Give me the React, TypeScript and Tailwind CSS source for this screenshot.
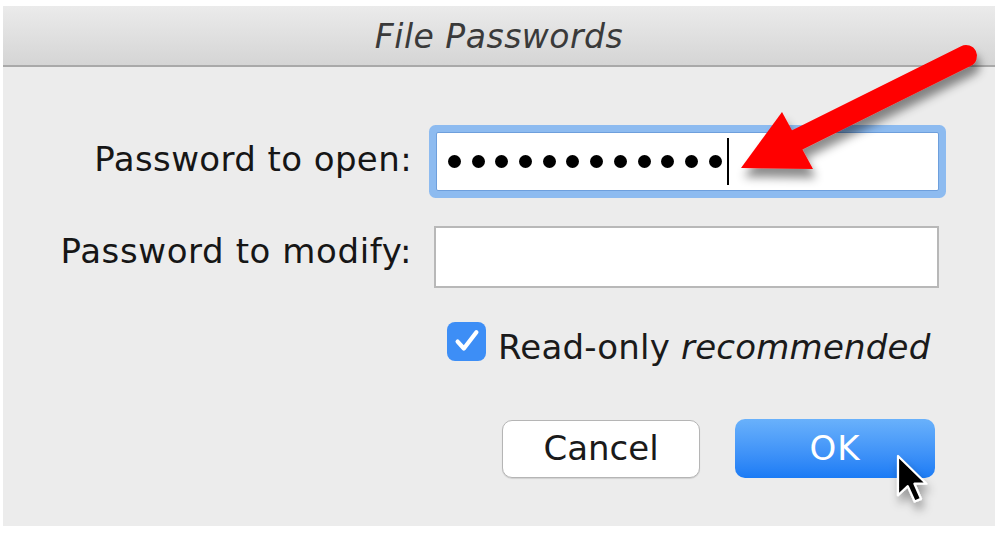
import React from 'react';

const font = { fontFamily: '"DejaVu Sans", "Liberation Sans", sans-serif' };

function Dots({ count }: { count: number }) {
  return (
    <div className="flex items-center gap-[10.7px]">
      {Array.from({ length: count }).map((_, i) => (
        <span key={i} className="block w-[13px] h-[13px] rounded-full bg-black" />
      ))}
    </div>
  );
}

function Annotation() {
  return (
    <svg className="absolute inset-0 pointer-events-none" width="1000" height="544" viewBox="0 0 1000 544">
      <defs>
        <filter id="shadow" x="-20%" y="-20%" width="140%" height="160%">
          <feDropShadow dx="3" dy="9" stdDeviation="5" floodColor="#000" floodOpacity="0.45" />
        </filter>
        <filter id="cshadow" x="-50%" y="-50%" width="200%" height="200%">
          <feDropShadow dx="1" dy="3" stdDeviation="2" floodColor="#000" floodOpacity="0.35" />
        </filter>
      </defs>
      {/* red arrow */}
      <g filter="url(#shadow)">
        <line x1="966" y1="56" x2="795" y2="141" stroke="#ff0000" strokeWidth="22" strokeLinecap="round" />
        <polygon points="741,168 782,112 813,169" fill="#ff0000" />
      </g>
      {/* mouse pointer */}
      <g transform="translate(898 456) scale(2.45)" filter="url(#cshadow)">
        <path
          d="M0 0 L0 16 L4 12.3 L6.8 18.6 L9.4 17.5 L6.7 11.3 L11.6 11.3 Z"
          fill="#000"
          stroke="#fff"
          strokeWidth="0.9"
          strokeLinejoin="round"
        />
      </g>
    </svg>
  );
}

export default function App() {
  return (
    <div className="relative w-[1000px] h-[544px] bg-white overflow-hidden" style={font}>
      <div className="ml-[3px] mt-[6px] w-[992px] h-[520px] flex flex-col bg-[#ececec]">
        {/* Title bar */}
        <div className="h-[61px] shrink-0 flex items-center justify-center bg-gradient-to-b from-[#ebebeb] to-[#d5d5d5] border-b-2 border-[#a9a9a9]">
          <span className="text-[33px] italic text-[#3a3a3a] tracking-[0.5px] pt-[3px]">File Passwords</span>
        </div>

        {/* Body */}
        <div className="flex-1 flex flex-col pt-[65px] text-[34px] text-[#161616]">
          <div className="flex items-center h-[59px]">
            <div className="w-[409px] text-right -mt-[4px] tracking-[0.4px]">Password to open:</div>
            <div className="ml-[24px] w-[503px] h-[59px] bg-white border border-[#6e9fdc] rounded-[2px] shadow-[0_0_0_7px_#8dbbf0] flex items-center pl-[11px]">
              <Dots count={12} />
              <span className="block ml-[5px] w-[2px] h-[47px] bg-black" />
            </div>
          </div>

          <div className="flex items-center h-[62px] mt-[35px]">
            <div className="w-[409px] text-right -mt-[12px] tracking-[0.6px]">Password to modify:</div>
            <div className="ml-[22px] w-[505px] h-[62px] bg-white border-2 border-[#b8b8b8]" />
          </div>

          <div className="flex items-center h-[40px] mt-[33px] pl-[444px]">
            <div className="w-[39px] h-[39px] rounded-[8px] bg-[#3d8ef6] flex items-center justify-center">
              <svg width="30" height="30" viewBox="0 0 24 24" fill="none">
                <path d="M4.5 12.5 L9.5 18 L19.5 5" stroke="#fff" strokeWidth="3.4" strokeLinecap="round" strokeLinejoin="round" />
              </svg>
            </div>
            <span className="ml-[12px] mt-[12px] tracking-[0.2px] text-[#1a1a1a]">
              Read-only <span className="italic">recommended</span>
            </span>
          </div>

          <div className="flex items-center justify-end gap-[35px] pr-[60px] mt-[58px]">
            <button className="w-[198px] h-[58px] bg-white border-[1.5px] border-[#b5b5b5] rounded-[10px] shadow-[0_1px_1px_rgba(0,0,0,0.12)] text-[34px] text-[#1a1a1a]">
              Cancel
            </button>
            <button className="w-[200px] h-[59px] rounded-[10px] bg-gradient-to-b from-[#69b1fb] to-[#1a7bf5] text-[34px] tracking-[1px] text-white">
              OK
            </button>
          </div>
        </div>
      </div>
      <Annotation />
    </div>
  );
}
